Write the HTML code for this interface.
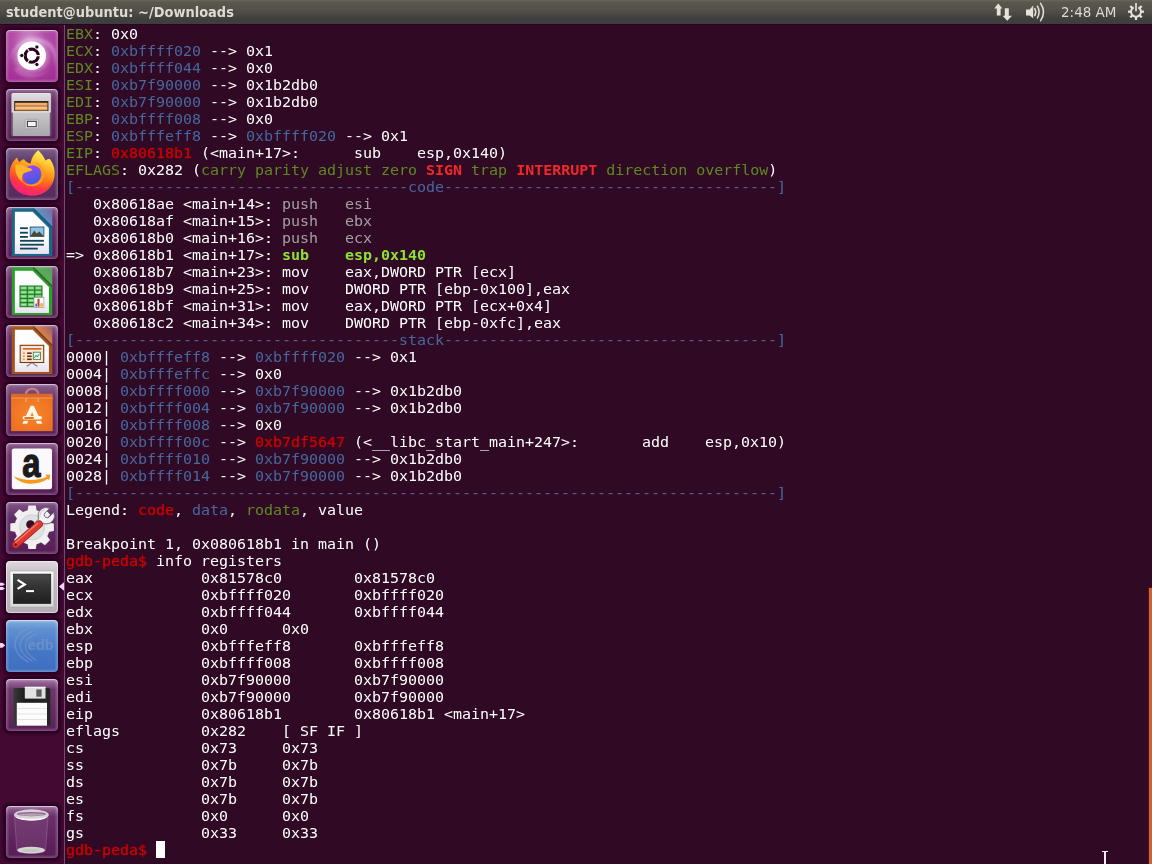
<!DOCTYPE html>
<html lang="en"><head><meta charset="utf-8"><title>student@ubuntu: ~/Downloads</title>
<style>
html,body{margin:0;padding:0}
body{width:1152px;height:864px;overflow:hidden;background:#300a24;position:relative;font-family:"Liberation Sans",sans-serif}
#topbar{position:absolute;left:0;top:0;width:1152px;height:24px;background:linear-gradient(#6a685b 0,#5a584b 2px,#55534a 8px,#4d4945 13px,#474342 16px,#3c403d 19px,#403d3f 24px);box-shadow:0 1px 0 #27061d;z-index:5}
#title{position:absolute;left:6px;top:3px;font:bold 13px/18px "DejaVu Sans","Liberation Sans",sans-serif;color:#dfdbd2;white-space:nowrap;transform:translateY(1px) scaleY(1.1);transform-origin:0 14px}
#clock{position:absolute;left:1061px;top:2.5px;font:13.5px/18px "DejaVu Sans","Liberation Sans",sans-serif;color:#dfdbd2;white-space:nowrap}
.ind{position:absolute;top:0}
#launcher{position:absolute;left:0;top:24px;width:64px;height:840px;background:#430933;border-right:1px solid #7a4676;z-index:4}
.tile{position:absolute;left:6px;width:52px;height:52px;border-radius:6px;box-sizing:border-box;overflow:hidden}
.tile svg{position:absolute;left:0;top:0}
#term{will-change:transform;position:absolute;left:66px;top:26px;width:1086px;font-family:"DejaVu Sans Mono","Liberation Mono",monospace;font-size:15px;line-height:17px;color:#fff;white-space:pre;letter-spacing:-0.03px}
.ln{height:17px;white-space:pre;transform:translateY(-0.2px) scaleY(.9);transform-origin:0 13.7px}
.g{color:#5f8a22}.b{color:#46689f}.k{color:#565f94}.r{color:#cc0000;text-shadow:0 0 1.500px rgba(204,0,0,.7)}.R{color:#ef2929;font-weight:bold}.G{color:#8ae234;font-weight:bold}.d{color:#a3a0a2}
#cur{position:absolute;left:156px;top:841px;width:9px;height:17px;background:#fff}
#scroll{position:absolute;left:1148px;top:587px;width:3px;height:277px;background:#c9623f;border-left:1px solid #5a1205;border-top:1px solid #5a1205}
#ibeam{position:absolute;left:1104px;top:851px;width:1.5px;height:13px;background:#f4eef2}
#ibeam:before{content:'';position:absolute;left:-2.5px;top:0;width:6px;height:1.2px;background:#f4eef2}
</style></head>
<body>
<div id="topbar">
<div id="title">student@ubuntu: ~/Downloads</div>
<svg class="ind" style="left:990px" width="26" height="24" viewBox="990 0 26 24">
<g fill="#e6e2da">
<path d="M998.2 3.6 L1002.4 8.4 L1000.6 8.4 L1000.6 15.6 L996.8 15.6 L996.8 8.4 L994.2 8.4 Z"/>
<path d="M1004.8 8.2 L1008.8 8.2 L1008.8 15.8 L1012 15.8 L1007.3 20.8 L1002.6 15.8 L1004.8 15.8 Z"/>
</g></svg>
<svg class="ind" style="left:1022px" width="28" height="24" viewBox="1022 0 28 24">
<path d="M1026 9.4 L1029.6 9.4 L1033.2 5.6 L1033.2 18.2 L1029.6 15.6 L1026 15.6 Z" fill="#e6e2da"/>
<g fill="none" stroke="#e6e2da" stroke-linecap="round">
<path d="M1034.8 8.6 Q1036.8 12 1034.8 15.6" stroke-width="1.5"/>
<path d="M1037.4 6.2 Q1040.8 12 1037.4 18" stroke-width="1.5"/>
<path d="M1040.6 3.4 Q1046.4 12 1040.6 20.6" stroke-width="1.5"/>
</g></svg>
<div id="clock">2:48 AM</div>
<svg class="ind" style="left:1124px" width="24" height="24" viewBox="1124 0 24 24">
<g stroke="#e6e2da" fill="none">
<path d="M1133.6 7.3 A5 5 0 1 0 1138.4 7.3" stroke-width="2"/>
<path d="M1136 3.6 V10.6" stroke-width="1.7" stroke-linecap="round"/>
<g stroke-width="2.2">
<path d="M1136 17 V20"/>
<path d="M1130.9 11.7 H1128"/>
<path d="M1141.1 11.7 H1144"/>
<path d="M1132.4 15.3 L1130.3 17.4"/>
<path d="M1139.6 15.3 L1141.7 17.4"/>
<path d="M1132.4 8.1 L1130.3 6"/>
<path d="M1139.6 8.1 L1141.7 6"/>
</g></g></svg>
</div>
<div id="launcher"><svg width="66" height="840" viewBox="0 24 66 840" style="position:absolute;left:0;top:0;overflow:visible">
<defs>
<filter id="bl1" x="-20%" y="-20%" width="140%" height="140%"><feGaussianBlur stdDeviation="1.2"/></filter>
<filter id="bl2" x="-30%" y="-30%" width="160%" height="160%"><feGaussianBlur stdDeviation="2.2"/></filter>
<filter id="bl05" x="-20%" y="-20%" width="140%" height="140%"><feGaussianBlur stdDeviation="0.5"/></filter>
<linearGradient id="tPurple" x1="0" y1="0" x2="0" y2="1"><stop offset="0" stop-color="#8a5a8c"/><stop offset=".25" stop-color="#6a3368"/><stop offset="1" stop-color="#581c55"/></linearGradient>
<linearGradient id="tHi" x1="0" y1="0" x2="0" y2="1"><stop offset="0" stop-color="#fff" stop-opacity=".55"/><stop offset=".12" stop-color="#fff" stop-opacity=".12"/><stop offset="1" stop-color="#fff" stop-opacity=".1"/></linearGradient>
<clipPath id="tc"><rect x="0" y="0" width="52" height="52" rx="4"/></clipPath>
</defs>
<symbol id="tsh" overflow="visible"><rect x="-3" y="-3" width="58" height="58" rx="6" fill="#2b0423" opacity=".95" filter="url(#bl1)"/></symbol>
<symbol id="tfr" overflow="visible"><rect x="1.300" y="1.300" width="49.400" height="49.400" rx="3" fill="none" stroke="#fff" stroke-opacity=".13" stroke-width="2.600"/><rect x=".5" y=".5" width="51" height="51" rx="3.500" fill="none" stroke="url(#tHi)" stroke-width="1"/></symbol>
<g transform="translate(6 30)">
<use href="#tsh"/>
<g clip-path="url(#tc)">
<radialGradient id="bfbg" cx=".45" cy=".2" r=".9"><stop offset="0" stop-color="#d49ad0"/><stop offset=".35" stop-color="#b34fa8"/><stop offset="1" stop-color="#a02a92"/></radialGradient>
<rect width="52" height="52" fill="url(#bfbg)"/>
<path d="M4 30 C6 12 24 4 40 10 C50 14 52 26 48 36 C50 22 42 12 28 12 C14 12 6 22 4 30Z" fill="#e5b9e2" opacity=".45" filter="url(#bl1)"/>
<path d="M8 40 C16 52 38 50 46 36 C40 46 22 48 12 36Z" fill="#c070b8" opacity=".6" filter="url(#bl1)"/>
<circle cx="25.7" cy="25.7" r="17.500" fill="#ecc8e9" opacity=".45" filter="url(#bl2)"/>
<circle cx="25.7" cy="25.7" r="14.300" fill="#fff" filter="url(#bl05)"/>
<circle cx="25.7" cy="25.7" r="13.600" fill="#fff"/>
</g>
<g fill="none" stroke="#2c001e">
<circle cx="25.7" cy="25.7" r="6.5" stroke-width="3.3"/>
</g>
<g stroke="#fff" stroke-width="1.2">
<path d="M25.7 25.7 L36 25.7"/><path d="M25.7 25.7 L20.5 16.7"/><path d="M25.7 25.7 L20.5 34.7"/>
</g>
<circle cx="25.7" cy="25.7" r="4.8" fill="#fff"/>
<g fill="#2c001e" stroke="#fff" stroke-width=".8">
<circle cx="15.8" cy="25.5" r="2.1"/><circle cx="30.9" cy="17" r="2.1"/><circle cx="30.9" cy="34.5" r="2.1"/>
</g>
<use href="#tfr"/>
</g>
<g transform="translate(6 89)">
<use href="#tsh"/>
<rect width="52" height="52" rx="4" fill="url(#tPurple)"/>
<linearGradient id="cab1" x1="0" y1="0" x2="0" y2="1"><stop offset="0" stop-color="#e4e2e6"/><stop offset="1" stop-color="#cfccd2"/></linearGradient>
<linearGradient id="cab2" x1="0" y1="0" x2="0" y2="1"><stop offset="0" stop-color="#cbc9cb"/><stop offset="1" stop-color="#a9a7ab"/></linearGradient>
<rect x="5" y="3.6" width="40.4" height="43.6" rx="1.5" fill="#77707a" opacity=".6" filter="url(#bl05)"/>
<rect x="5.5" y="3.9" width="39.4" height="9" rx="1.5" fill="url(#cab1)"/>
<rect x="5.5" y="11.5" width="39.4" height="12" fill="#d3d0d5"/>
<rect x="8.2" y="12" width="34.2" height="10.5" fill="#3a2418"/>
<rect x="9.2" y="13.8" width="32.2" height="3" fill="#f0b070"/>
<rect x="9.2" y="16.2" width="32.2" height="1.2" fill="#d8842e"/>
<rect x="9.2" y="17.4" width="32.2" height="3.4" fill="#f3c48c"/>
<rect x="9.2" y="20.3" width="32.2" height="1.2" fill="#e09a4a"/>
<rect x="6.8" y="22.3" width="37" height="24.6" rx="1" fill="url(#cab2)"/>
<rect x="6.8" y="22.3" width="37" height="1.2" fill="#e6e4e8"/>
<rect x="19.2" y="30.3" width="13" height="9.5" rx="1.2" fill="#dedcdf" stroke="#8c8a8e" stroke-width=".6"/>
<rect x="21.4" y="32.3" width="8.8" height="5.4" fill="#f4f4f4" stroke="#333" stroke-width="1"/>
<use href="#tfr"/>
</g>
<g transform="translate(6 148)">
<use href="#tsh"/>
<linearGradient id="tff" x1="0" y1="0" x2="0" y2="1"><stop offset="0" stop-color="#7d5c88"/><stop offset=".3" stop-color="#5b3864"/><stop offset="1" stop-color="#5a2a5c"/></linearGradient>
<rect width="52" height="52" rx="4" fill="url(#tff)"/>
<linearGradient id="ffo" x1=".7" y1="0" x2=".3" y2="1"><stop offset="0" stop-color="#fff36a"/><stop offset=".25" stop-color="#ffc22e"/><stop offset=".5" stop-color="#ff8216"/><stop offset=".74" stop-color="#ff3d3a"/><stop offset="1" stop-color="#f0188a"/></linearGradient>
<linearGradient id="ffg" x1=".3" y1="0" x2=".6" y2="1"><stop offset="0" stop-color="#9a4af0"/><stop offset="1" stop-color="#3a5ae0"/></linearGradient>
<path d="M32.2 2.2 C34.5 4.5 37.5 8 39.5 12.4 C41 11.5 42.5 11.2 43.5 10.8 C47.5 15.5 49.5 22 48.4 29 C47 39 38.5 47.8 26.2 47.8 C13 47.800 3.2 38.5 3.600 25.500 C3.800 18.500 6.500 13.500 11.200 9.400 C11.500 11.500 12.500 13 13.500 14 C14.800 12.500 16.500 11.500 18 11.200 C19.500 13.500 21.500 15 24.500 15.500 C25.500 9.500 28.500 5 32.200 2.200Z" fill="url(#ffo)"/>
<circle cx="26.300" cy="27" r="9.800" fill="url(#ffg)"/>
<path d="M9.500 17 C13 16 18 17 21 19.500 C23.500 19.800 25.500 20.500 26.500 22 C24 23.500 20.500 24 17.500 25.500 C15.500 27.500 15.500 31 17 34.500 C11.500 31 8.500 24 9.500 17Z" fill="#ffb629"/>
<path d="M28 13.500 C33 14.500 37.500 19 38.200 25 C38.800 31.500 34.500 37.500 27.500 38.200 C21 38.800 16 35.500 14.500 30.500 C17 35 22 37.200 27 36.200 C32.500 35 36 30 35.200 24.500 C34.600 20.500 32 17 28 13.500Z" fill="#ff9a1f" opacity=".9"/>
<path d="M6 30 C8 40 16 46.500 26.200 46.800 C36 47 43.500 41.500 46.500 33 C42 40 35 43.500 27 43.200 C18 43 10 38.500 6 30Z" fill="#ff2a6a" opacity=".75" filter="url(#bl05)"/>
<use href="#tfr"/>
</g>
<linearGradient id="docsh" x1="0" y1="0" x2="0" y2="1"><stop offset="0" stop-color="#e6e0ee" stop-opacity="0"/><stop offset="1" stop-color="#e6e0ee" stop-opacity=".9"/></linearGradient>
<symbol id="doc" overflow="visible">
<path d="M5.800 1 H27.600 L46.300 19.700 V49 H5.800Z" fill="currentColor"/>
<path d="M8.900 4.700 H26.600 L42.900 21 V46.700 H8.900Z" fill="#fdfdfd"/>
<path d="M8.900 30 H42.900 V46.700 H8.900Z" fill="url(#docsh)"/>
</symbol>
<g transform="translate(6 207)">
<use href="#tsh"/>
<rect width="52" height="52" rx="4" fill="url(#tPurple)"/>
<linearGradient id="wfold" x1="0" y1="1" x2="1" y2="0"><stop offset="0" stop-color="#2f83ad"/><stop offset=".5" stop-color="#5aa0cf"/><stop offset="1" stop-color="#7d6aa8"/></linearGradient>
<path d="M27.600 1 H46.300 V19.700Z" fill="url(#wfold)" opacity=".85"/>
<use href="#doc" color="#1d6688"/>
<path d="M27 1.200 L46.200 20.400" stroke="#165a7a" stroke-width="1.400" fill="none"/>
<g fill="#11455c">
<rect x="14" y="20.300" width="7.900" height="1.800"/><rect x="14" y="24.800" width="7.900" height="1.800"/><rect x="14" y="29" width="7.900" height="1.800"/>
<rect x="14" y="32.900" width="23.900" height="1.800"/><rect x="14" y="36.800" width="23.900" height="1.800"/><rect x="14" y="40.700" width="17.800" height="1.800"/>
</g>
<rect x="24.200" y="20" width="13.700" height="9.500" fill="#8fc4ea" stroke="#11455c" stroke-width=".8"/>
<path d="M24.600 29.100 L28.200 23.600 L30.600 26.600 L33.400 24.400 L37.500 29.100Z" fill="#4a4a2a"/>
<use href="#tfr"/>
</g>
<g transform="translate(6 266)">
<use href="#tsh"/>
<rect width="52" height="52" rx="4" fill="url(#tPurple)"/>
<linearGradient id="cfold" x1="0" y1="1" x2="1" y2="0"><stop offset="0" stop-color="#2fa02f"/><stop offset=".6" stop-color="#55b955"/><stop offset="1" stop-color="#5e9a5e"/></linearGradient>
<path d="M27.600 1 H46.300 V19.700Z" fill="url(#cfold)" opacity=".9"/>
<use href="#doc" color="#2a9d2c"/>
<path d="M27 1.200 L46.200 20.400" stroke="#3d5a2a" stroke-width="1.400" fill="none"/>
<rect x="14" y="20" width="22" height="20.700" fill="#6fd06f"/>
<g stroke="#1c6e1e" stroke-width="1" fill="none">
<rect x="14" y="20" width="22" height="20.700"/>
<path d="M21.300 20 V40.700 M28.700 20 V40.700 M14 24.100 H36 M14 28.300 H36 M14 32.400 H36 M14 36.600 H36"/>
</g>
<g fill="#c9f2c9" opacity=".6"><rect x="15.500" y="21.300" width="4.500" height="1.400"/><rect x="22.800" y="21.300" width="4.500" height="1.400"/><rect x="30" y="21.300" width="4.500" height="1.400"/><rect x="15.500" y="25.500" width="4.500" height="1.400"/><rect x="22.800" y="25.500" width="4.500" height="1.400"/><rect x="30" y="25.500" width="4.500" height="1.400"/><rect x="15.500" y="29.600" width="4.500" height="1.400"/><rect x="22.800" y="29.600" width="4.500" height="1.400"/><rect x="15.500" y="33.800" width="4.500" height="1.400"/><rect x="22.800" y="33.800" width="4.500" height="1.400"/><rect x="15.500" y="38" width="4.500" height="1.400"/><rect x="22.800" y="38" width="4.500" height="1.400"/></g>
<rect x="28" y="31.400" width="9.900" height="10" fill="#fbfbfb" stroke="#9a9a9a" stroke-width=".7"/>
<rect x="29.300" y="37.500" width="1.700" height="3.200" fill="#3a78c8"/>
<rect x="31.500" y="32.800" width="2" height="7.900" fill="#c23a2a"/>
<rect x="34.200" y="37.200" width="2.700" height="3.500" fill="#e8b63a"/>
<use href="#tfr"/>
</g>
<g transform="translate(6 325)">
<use href="#tsh"/>
<rect width="52" height="52" rx="4" fill="url(#tPurple)"/>
<linearGradient id="ifold" x1="0" y1="1" x2="1" y2="0"><stop offset="0" stop-color="#b8622a"/><stop offset=".55" stop-color="#d98848"/><stop offset="1" stop-color="#9c5a6a"/></linearGradient>
<path d="M27.600 1 H46.300 V19.700Z" fill="url(#ifold)" opacity=".9"/>
<use href="#doc" color="#a4551c"/>
<path d="M27 1.200 L46.200 20.400" stroke="#7a3a22" stroke-width="1.400" fill="none"/>
<path d="M26.100 37.500 L20.700 41.600 M26.100 37.500 L31.400 41.600" stroke="#8a8a92" stroke-width="1.300" fill="none"/>
<rect x="14.200" y="20.300" width="23.500" height="17.200" fill="#fce6d2" stroke="#7c3a12" stroke-width="1.100"/>
<rect x="16.900" y="23" width="18.400" height="1.700" fill="#cf6a32"/>
<g fill="#d9955a"><rect x="16.900" y="27.400" width="1.900" height="1.600"/><rect x="16.900" y="30.500" width="1.900" height="1.600"/><rect x="16.900" y="33.500" width="1.900" height="1.600"/></g>
<g fill="#6e2a0c"><rect x="21.100" y="27.400" width="4.600" height="1.600"/><rect x="21.100" y="30.500" width="4.600" height="1.600"/><rect x="21.100" y="33.500" width="4.600" height="1.600"/></g>
<rect x="27.300" y="27.200" width="7.200" height="7.200" fill="#eef6ea" stroke="#3f8a5a" stroke-width=".9"/>
<path d="M28.400 32.800 L30 30.200 L31.200 32 L33.400 28.800" stroke="#2f7a4a" stroke-width=".9" fill="none"/>
<use href="#tfr"/>
</g>
<g transform="translate(6 384)">
<use href="#tsh"/>
<linearGradient id="tsc" x1="0" y1="0" x2="0" y2="1"><stop offset="0" stop-color="#8c6090"/><stop offset=".25" stop-color="#6c3a6c"/><stop offset="1" stop-color="#5c2058"/></linearGradient>
<rect width="52" height="52" rx="4" fill="url(#tsc)"/>
<radialGradient id="bag" cx=".5" cy=".5" r=".7"><stop offset="0" stop-color="#f9872c"/><stop offset="1" stop-color="#ea6d1e"/></radialGradient>
<path d="M20 16.500 V10.500 C20 2.800 32.200 2.800 32.200 10.500 V16.500" fill="none" stroke="#e4977a" stroke-opacity=".75" stroke-width="2.200"/>
<rect x="5.100" y="9.700" width="41.600" height="5" fill="#d9682a"/>
<rect x="5.100" y="13.700" width="41.600" height="33.400" fill="url(#bag)"/>
<rect x="5.100" y="13.500" width="41.600" height="1" fill="#f6a462" opacity=".8"/>
<path d="M20 18 V14 M32.200 18 V14" stroke="#f0a070" stroke-width="2.200" opacity=".7" fill="none"/>
<path d="M24.700 21.800 L16.300 39.800 L21.100 39.800 L26.100 28.200 L31.100 39.800 L36.300 39.800 L27.700 21.800Z" fill="#fff6ea"/>
<rect x="16.600" y="32" width="19.300" height="4" rx="2" fill="#fff6ea"/>
<rect x="15.900" y="35.500" width="21" height="1.400" fill="#f07c22"/>
<rect x="18.200" y="33.100" width="9.800" height="1.800" rx=".9" fill="#e9701c"/>
<use href="#tfr"/>
</g>
<g transform="translate(6 443)">
<use href="#tsh"/>
<rect width="52" height="52" rx="4" fill="url(#tPurple)"/>
<rect x="5.800" y="5.500" width="40.200" height="40.800" rx="2.200" fill="#fbf9fc"/>
<text x="0" y="0" transform="translate(16.200 33.700) scale(.82 1)" font-family="'Liberation Sans',sans-serif" font-weight="bold" font-size="40" fill="#1b1b1b" stroke="#1b1b1b" stroke-width="1.300" stroke-linejoin="round">a</text>
<path d="M7.600 33.200 C16 37.600 31 38.400 40.600 33.800 L39.600 31.600 L44.400 31.800 L43 37.600 L42 35.800 C31 43 15 42.400 7.600 33.200Z" fill="#f6991c"/>
<use href="#tfr"/>
</g>
<g transform="translate(6 502)">
<use href="#tsh"/>
<linearGradient id="tst" x1="0" y1="0" x2="0" y2="1"><stop offset="0" stop-color="#82568a"/><stop offset=".3" stop-color="#5f2e62"/><stop offset="1" stop-color="#591f57"/></linearGradient>
<rect width="52" height="52" rx="4" fill="url(#tst)"/>
<g transform="translate(26.100 25.300)">
<g fill="#f1eff2">
<circle r="17.600"/>
<g id="tooth"><path d="M-4.600 -16 L-3.700 -21.800 H3.700 L4.600 -16Z"/></g>
<use href="#tooth" transform="rotate(45)"/><use href="#tooth" transform="rotate(90)"/><use href="#tooth" transform="rotate(135)"/><use href="#tooth" transform="rotate(180)"/><use href="#tooth" transform="rotate(225)"/><use href="#tooth" transform="rotate(270)"/><use href="#tooth" transform="rotate(315)"/>
</g>
<circle r="12.600" fill="#dde3e1"/>
<circle r="12.600" fill="none" stroke="#c9cfcd" stroke-width=".8"/>
<circle cx="-1.600" cy="-2.800" r="4.300" fill="#3b0a2c"/>
</g>
<g transform="translate(40.300 13.700) rotate(45)"><path d="M-2.900 -7.700 L-2.900 -1.200 A2.900 2.900 0 0 0 2.900 -1.200 L2.900 -7.700 L6.280 -5.270 A8.200 8.200 0 0 1 3.100 7.600 L3.100 12.500 L-3.100 12.500 L-3.100 7.600 A8.200 8.200 0 0 1 -6.280 -5.270Z" fill="#f3f3f6" stroke="#6f6478" stroke-width=".9" stroke-linejoin="round"/>
<path d="M-5.200 -3.500 A6.400 6.400 0 0 0 -3.500 5.400" stroke="#cfcfd8" stroke-width="1.200" fill="none"/></g>
<path d="M9.800 42.600 L33.200 22.200" stroke="#a81c18" stroke-width="7.400" stroke-linecap="round" fill="none"/>
<path d="M9.800 42.600 L33.200 22.200" stroke="#dc3a30" stroke-width="6" stroke-linecap="round" fill="none"/>
<path d="M9.200 40.800 L32 21" stroke="#f58a7c" stroke-width="1.500" fill="none" opacity=".8"/>
<circle cx="9.600" cy="42.800" r="1.300" fill="#6a0c0a"/>
<use href="#tfr"/>
</g>
<g transform="translate(6 561)">
<use href="#tsh"/>
<linearGradient id="tterm" x1="0" y1="0" x2="0" y2="1"><stop offset="0" stop-color="#ded9de"/><stop offset=".2" stop-color="#c9c5ca"/><stop offset="1" stop-color="#b5adb5"/></linearGradient>
<rect width="52" height="52" rx="4" fill="url(#tterm)"/>
<linearGradient id="tfrm" x1="0" y1="0" x2="0" y2="1"><stop offset="0" stop-color="#fafafa"/><stop offset="1" stop-color="#d9d9d9"/></linearGradient>
<rect x="3.900" y="10" width="44" height="36" rx="1" fill="url(#tfrm)" stroke="#a9a6aa" stroke-width=".6"/>
<linearGradient id="tscr" x1="0" y1="0" x2="0" y2="1"><stop offset="0" stop-color="#4a4a4a"/><stop offset=".4" stop-color="#343434"/><stop offset="1" stop-color="#1f1f1f"/></linearGradient>
<rect x="7.400" y="13.100" width="37.400" height="29.400" fill="url(#tscr)" stroke="#111" stroke-width=".6"/>
<path d="M11.600 18.900 L18.700 23.400 L11.600 27.900" fill="none" stroke="#fff" stroke-width="2.300"/>
<rect x="20" y="29.100" width="8" height="2" fill="#fff"/>
<rect x=".5" y=".5" width="51" height="51" rx="3.500" fill="none" stroke="#fff" stroke-opacity=".5"/>
</g>
<g fill="#f1d4f0">
<path d="M0 582.800 H2.600 L5 584.300 L2.600 585.800 H0Z"/>
<path d="M0 586.900 H2.600 L5 588.400 L2.600 589.900 H0Z"/>
<path d="M64 582.200 L58.800 586.500 L64 590.800Z"/>
</g>
<g transform="translate(6 620)">
<use href="#tsh"/>
<linearGradient id="tedb" x1="0" y1="0" x2="0" y2="1"><stop offset="0" stop-color="#86aede"/><stop offset=".18" stop-color="#5f90d2"/><stop offset=".6" stop-color="#4577c6"/><stop offset="1" stop-color="#3d6dc0"/></linearGradient>
<rect width="52" height="52" rx="4" fill="url(#tedb)"/>
<g fill="none" stroke="#7c9bc9" stroke-opacity=".5" stroke-linecap="round">
<path d="M22 8.500 C8 14 2 30 22 42" stroke-width="1.800"/>
<path d="M27 11 C12 17 8 30 26 41" stroke-width="1.600"/>
<path d="M31 13.500 C17 19 14 30 30 40" stroke-width="1.400"/>
</g>
<text x="21.500" y="30" font-family="'Liberation Sans',sans-serif" font-weight="bold" font-size="15" fill="#7f9ccb" fill-opacity=".6" textLength="26" lengthAdjust="spacingAndGlyphs">edb</text>
<use href="#tfr"/>
</g>
<path d="M0 642.900 H2.400 L5.200 645.300 L2.400 647.700 H0Z" fill="#f1d4f0"/>
<g transform="translate(6 679)">
<use href="#tsh"/>
<linearGradient id="tfl" x1="0" y1="0" x2="0" y2="1"><stop offset="0" stop-color="#a678a6"/><stop offset=".2" stop-color="#6e386c"/><stop offset="1" stop-color="#5a1f57"/></linearGradient>
<rect width="52" height="52" rx="4" fill="url(#tfl)"/>
<linearGradient id="flb" x1="0" y1="0" x2="1" y2="0"><stop offset="0" stop-color="#3a3a3a"/><stop offset=".3" stop-color="#1c1c1c"/><stop offset="1" stop-color="#262626"/></linearGradient>
<path d="M7.400 9 H43 L44.400 10.400 V46.700 H7.400Z" fill="url(#flb)"/>
<rect x="18.800" y="7.800" width="20.700" height="11.800" fill="#e3e1e3"/>
<rect x="18.800" y="7.800" width="20.700" height="1.200" fill="#f6f6f6"/>
<rect x="30.300" y="10.400" width="5.300" height="7.300" fill="#5a5a5a"/>
<rect x="10.800" y="23.800" width="30.200" height="22.900" fill="#fcfcfc"/>
<path d="M10.800 29.500 H41 M10.800 35 H41 M10.800 40.500 H41" stroke="#dcdcdc" stroke-width=".8"/>
<use href="#tfr"/>
</g>
<g transform="translate(6 806)">
<use href="#tsh"/>
<linearGradient id="ttr" x1="0" y1="0" x2="0" y2="1"><stop offset="0" stop-color="#9a6a9c"/><stop offset=".2" stop-color="#6b2f69"/><stop offset="1" stop-color="#561c54"/></linearGradient>
<rect width="52" height="52" rx="4" fill="url(#ttr)"/>
<path d="M8.400 9 L10.900 44.500 C14 48.500 36 48.500 39.500 44.500 L42.200 9Z" fill="#9a6e9c" fill-opacity=".22" stroke="#b99bbb" stroke-opacity=".45" stroke-width=".7"/>
<ellipse cx="25.100" cy="44.200" rx="13.800" ry="3.400" fill="#d9d0d8"/>
<ellipse cx="25.100" cy="44.500" rx="8.500" ry="1.700" fill="#b9c9b4" opacity=".8"/>
<ellipse cx="25.400" cy="8.800" rx="17.400" ry="5.500" fill="#d9d1d9"/>
<path d="M8 8.800 A17.400 5.500 0 0 0 42.800 8.800 L42.300 10 A17 4.200 0 0 1 8.500 10Z" fill="#fff"/>
<path d="M8.600 10.200 C14 16 37 16 42.200 10.200 C37 13.600 14 13.600 8.600 10.200Z" fill="#fff"/>
<ellipse cx="25.400" cy="8.100" rx="14.600" ry="2.100" fill="#8d6a8c"/>
<ellipse cx="25.400" cy="8.600" rx="13" ry="1.300" fill="#c7b6c6" opacity=".7"/>
<use href="#tfr"/>
</g>
</svg></div>
<div id="term"><div class="ln"><span class="g">EBX</span>: 0x0</div><div class="ln"><span class="g">ECX</span>: <span class="b">0xbffff020</span> --&gt; 0x1</div><div class="ln"><span class="g">EDX</span>: <span class="b">0xbffff044</span> --&gt; 0x0</div><div class="ln"><span class="g">ESI</span>: <span class="b">0xb7f90000</span> --&gt; 0x1b2db0</div><div class="ln"><span class="g">EDI</span>: <span class="b">0xb7f90000</span> --&gt; 0x1b2db0</div><div class="ln"><span class="g">EBP</span>: <span class="b">0xbffff008</span> --&gt; 0x0</div><div class="ln"><span class="g">ESP</span>: <span class="b">0xbfffeff8</span> --&gt; <span class="b">0xbffff020</span> --&gt; 0x1</div><div class="ln"><span class="g">EIP</span>: <span class="r">0x80618b1</span> (&lt;main+17&gt;:      sub    esp,0x140)</div><div class="ln"><span class="g">EFLAGS</span>: 0x282 (<span class="g">carry parity adjust zero</span> <span class="R">SIGN</span> <span class="g">trap</span> <span class="R">INTERRUPT</span> <span class="g">direction overflow</span>)</div><div class="ln"><span class="b">[</span><span class="k">-------------------------------------</span><span class="b">code</span><span class="k">-------------------------------------</span><span class="b">]</span></div><div class="ln">   0x80618ae &lt;main+14&gt;:<span class="d"> push   esi</span></div><div class="ln">   0x80618af &lt;main+15&gt;:<span class="d"> push   ebx</span></div><div class="ln">   0x80618b0 &lt;main+16&gt;:<span class="d"> push   ecx</span></div><div class="ln">=&gt; 0x80618b1 &lt;main+17&gt;:<span class="G"> sub    esp,0x140</span></div><div class="ln">   0x80618b7 &lt;main+23&gt;: mov    eax,DWORD PTR [ecx]</div><div class="ln">   0x80618b9 &lt;main+25&gt;: mov    DWORD PTR [ebp-0x100],eax</div><div class="ln">   0x80618bf &lt;main+31&gt;: mov    eax,DWORD PTR [ecx+0x4]</div><div class="ln">   0x80618c2 &lt;main+34&gt;: mov    DWORD PTR [ebp-0xfc],eax</div><div class="ln"><span class="b">[</span><span class="k">------------------------------------</span><span class="b">stack</span><span class="k">-------------------------------------</span><span class="b">]</span></div><div class="ln">0000| <span class="b">0xbfffeff8</span> --&gt; <span class="b">0xbffff020</span> --&gt; 0x1</div><div class="ln">0004| <span class="b">0xbfffeffc</span> --&gt; 0x0</div><div class="ln">0008| <span class="b">0xbffff000</span> --&gt; <span class="b">0xb7f90000</span> --&gt; 0x1b2db0</div><div class="ln">0012| <span class="b">0xbffff004</span> --&gt; <span class="b">0xb7f90000</span> --&gt; 0x1b2db0</div><div class="ln">0016| <span class="b">0xbffff008</span> --&gt; 0x0</div><div class="ln">0020| <span class="b">0xbffff00c</span> --&gt; <span class="r">0xb7df5647</span> (&lt;__libc_start_main+247&gt;:       add    esp,0x10)</div><div class="ln">0024| <span class="b">0xbffff010</span> --&gt; <span class="b">0xb7f90000</span> --&gt; 0x1b2db0</div><div class="ln">0028| <span class="b">0xbffff014</span> --&gt; <span class="b">0xb7f90000</span> --&gt; 0x1b2db0</div><div class="ln"><span class="b">[</span><span class="k">------------------------------------------------------------------------------</span><span class="b">]</span></div><div class="ln">Legend: <span class="r">code</span>, <span class="b">data</span>, <span class="g">rodata</span>, value</div><div class="ln">&nbsp;</div><div class="ln">Breakpoint 1, 0x080618b1 in main ()</div><div class="ln"><span class="r">gdb-peda$</span> info registers</div><div class="ln">eax            0x81578c0        0x81578c0</div><div class="ln">ecx            0xbffff020       0xbffff020</div><div class="ln">edx            0xbffff044       0xbffff044</div><div class="ln">ebx            0x0      0x0</div><div class="ln">esp            0xbfffeff8       0xbfffeff8</div><div class="ln">ebp            0xbffff008       0xbffff008</div><div class="ln">esi            0xb7f90000       0xb7f90000</div><div class="ln">edi            0xb7f90000       0xb7f90000</div><div class="ln">eip            0x80618b1        0x80618b1 &lt;main+17&gt;</div><div class="ln">eflags         0x282    [ SF IF ]</div><div class="ln">cs             0x73     0x73</div><div class="ln">ss             0x7b     0x7b</div><div class="ln">ds             0x7b     0x7b</div><div class="ln">es             0x7b     0x7b</div><div class="ln">fs             0x0      0x0</div><div class="ln">gs             0x33     0x33</div><div class="ln"><span class="r">gdb-peda$</span> </div></div>
<div id="scroll"></div><div id="ibeam"></div><div id="cur"></div>
</body></html>
